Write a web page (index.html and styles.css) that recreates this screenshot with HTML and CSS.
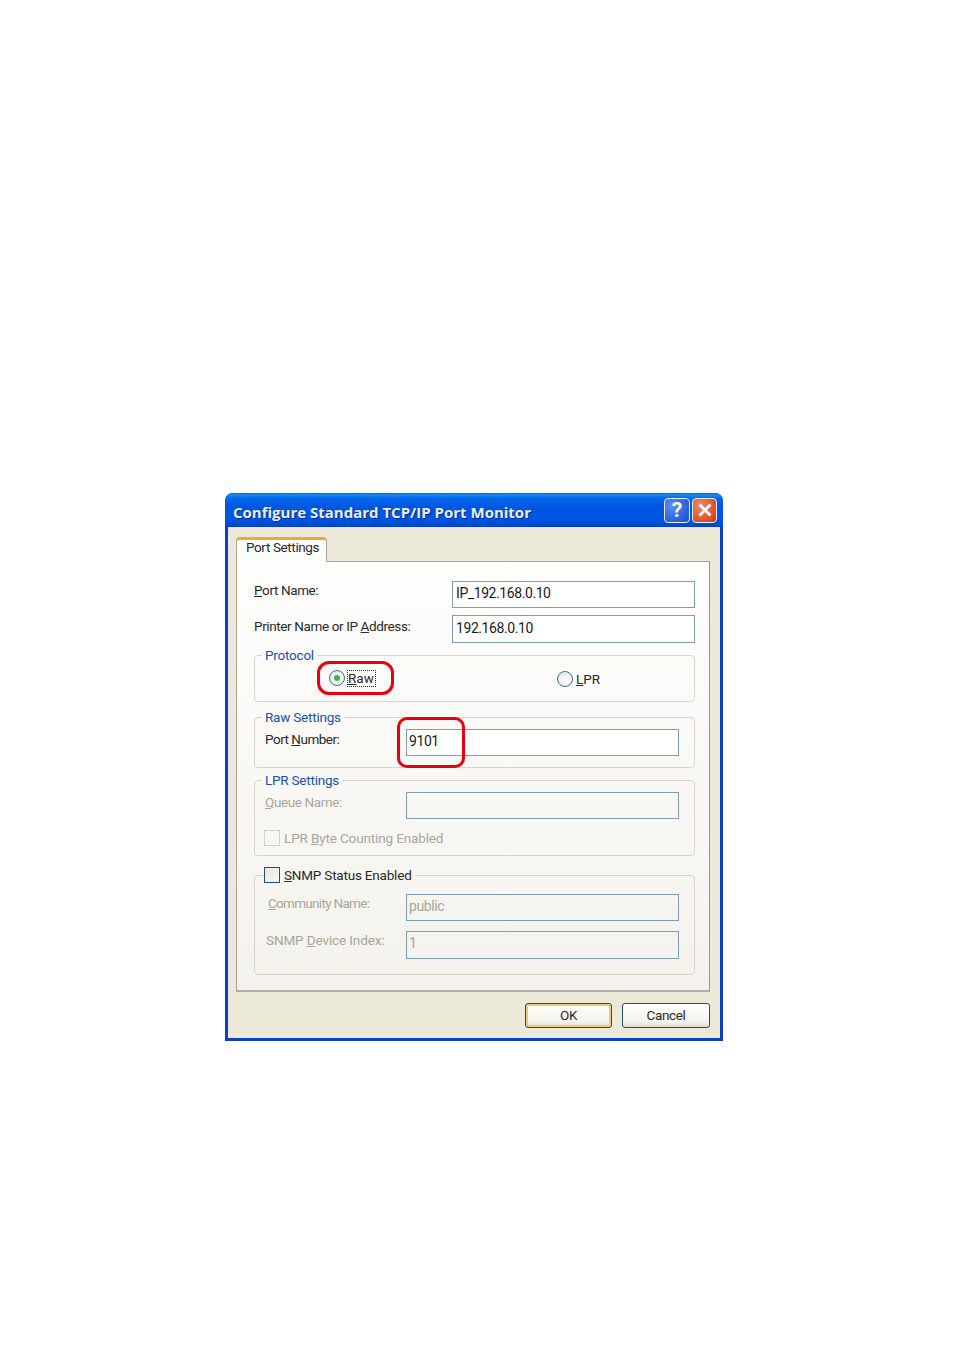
FILE: index.html
```html
<!DOCTYPE html>
<html lang="en">
<head>
<meta charset="utf-8">
<title>Configure Standard TCP/IP Port Monitor</title>
<link rel="stylesheet" href="styles.css">
</head>
<body>
<div class="dialog">
  <header class="titlebar">
    <span class="title">Configure Standard TCP/IP Port Monitor</span>
    <div class="controls">
      <span class="ctrl help">?</span>
      <span class="ctrl close">
        <svg width="16" height="16" viewBox="0 0 16 16"><path d="M2.5 2.5 13.5 13.5M13.5 2.5 2.5 13.5" stroke="#fff" stroke-width="2.8" fill="none"/></svg>
      </span>
    </div>
  </header>
  <div class="client">
    <div class="tabstrip"><span class="tab">Port Settings</span></div>
    <div class="panel">
      <div class="row row-a">
        <span class="lbl lbl-a"><u>P</u>ort Name:</span>
        <span class="input wide">IP_192.168.0.10</span>
      </div>
      <div class="row row-b">
        <span class="lbl lbl-a">Printer Name or IP <u>A</u>ddress:</span>
        <span class="input wide">192.168.0.10</span>
      </div>

      <fieldset class="group g-protocol">
        <legend>Protocol</legend>
        <div class="radios">
          <span class="radio-item raw">
            <span class="radio on"><i></i></span><span class="focus"><u>R</u>aw</span>
          </span>
          <span class="radio-item lpr">
            <span class="radio"></span><span><u>L</u>PR</span>
          </span>
        </div>
      </fieldset>

      <fieldset class="group g-raw">
        <legend>Raw Settings</legend>
        <div class="row inset">
          <span class="lbl lbl-b">Port <u>N</u>umber:</span>
          <span class="input mid">9101</span>
        </div>
      </fieldset>

      <fieldset class="group g-lpr">
        <legend>LPR Settings</legend>
        <div class="row inset off">
          <span class="lbl lbl-b lbl-q"><u>Q</u>ueue Name:</span>
          <span class="input mid"></span>
        </div>
        <div class="check-row off">
          <span class="check dim"></span><span>LPR <u>B</u>yte Counting Enabled</span>
        </div>
      </fieldset>

      <fieldset class="group g-snmp">
        <legend class="legend-check"><span class="check"></span><span><u>S</u>NMP Status Enabled</span></legend>
        <div class="row inset off first">
          <span class="lbl lbl-c"><u>C</u>ommunity Name:</span>
          <span class="input mid">public</span>
        </div>
        <div class="row inset off second">
          <span class="lbl lbl-d">SNMP <u>D</u>evice Index:</span>
          <span class="input mid">1</span>
        </div>
      </fieldset>
    </div>
    <div class="buttons">
      <span class="btn default">OK</span>
      <span class="btn">Cancel</span>
    </div>
  </div>
  <div class="mark mark-raw"></div>
  <div class="mark mark-port"></div>
</div>
</body>
</html>
```
FILE: styles.css
```css
* { box-sizing: border-box; }
html, body { margin: 0; background: #fff; }
body { height: 1350px; overflow: hidden; }

.dialog {
  position: relative;
  width: 498px;
  height: 548px;
  margin: 493px 0 0 225px;
  display: flex;
  flex-direction: column;
  font-family: Roboto, "Liberation Sans", Arial, sans-serif;
  font-size: 13.5px;
  letter-spacing: -0.38px;
  color: #2a2a2a;
}

.titlebar {
  height: 34px;
  flex: none;
  display: flex;
  align-items: center;
  justify-content: space-between;
  padding: 0 6px 0 8px;
  border-radius: 7px 7px 0 0;
  background: linear-gradient(#0a62e2 0, #0f8cf5 2px, #0868ec 5px, #0055e3 14px, #0056e6 26px, #0049cc 32px, #0040bb 34px);
}
.title {
  font-family: "Open Sans", sans-serif;
  font-weight: 700;
  font-size: 15px;
  letter-spacing: 0;
  line-height: 20px;
  padding-top: 3px;
  color: #e6eeff;
  text-shadow: 1px 1px 1px #0a2f90;
}
.controls { display: flex; gap: 2px; }
.ctrl {
  width: 26px;
  height: 25px;
  display: flex;
  align-items: center;
  justify-content: center;
  border: 1px solid #e6eefc;
  border-radius: 4px;
}
.help {
  background: radial-gradient(circle at 30% 30%, #5b8ff0, #2a5fd6 70%, #1d49b8);
  color: #fff;
  font-size: 21px;
  font-weight: 700;
  letter-spacing: 0;
}
.close { background: radial-gradient(circle at 30% 30%, #ea8a68, #dd4f2a 70%, #c03a18); width: 25px; }

.client {
  flex: 1;
  display: flex;
  flex-direction: column;
  background: #ece9d8;
  border: solid #0a3fc6;
  border-width: 0 3px 3px;
  padding: 10px 10px 0 8px;
}
.tabstrip { height: 24px; display: flex; flex: none; }
.tab {
  width: 91px;
  height: 25px;
  padding: 0 0 0 9px;
  background: #fdfdfb;
  border: 1px solid #a9a595;
  border-top: 3px solid #f0a92c;
  border-bottom: 0;
  border-radius: 4px 4px 0 0;
  line-height: 15px;
  position: relative;
  z-index: 1;
}
.panel {
  height: 431px;
  flex: none;
  padding: 19px 14px 0 17px;
  background: linear-gradient(#fefefd, #f4f2ec);
  border: 1px solid #a9a595;
  border-right-color: #9b9888;
  border-bottom: 2px solid #b2ae9f;
}

.row { display: flex; align-items: flex-start; }
.row-a { height: 27px; margin-bottom: 7px; }
.row-b { height: 28px; }
.lbl { line-height: 18px; }
.lbl-a { width: 198px; flex: none; }
.row-b .lbl { padding-top: 2px; }
.lbl-b { width: 141px; flex: none; padding-top: 1px; letter-spacing: -0.5px; }
.lbl-q { padding-top: 1px; letter-spacing: -0.38px; }
.lbl-c { width: 138px; flex: none; margin-left: 3px; letter-spacing: -0.7px; }
.lbl-d { width: 140px; flex: none; margin-left: 1px; letter-spacing: -0.11px; }
.input {
  display: block;
  height: 27px;
  line-height: 23px;
  padding: 0 3px;
  background: #fff;
  border: 1px solid #7f9db9;
  color: #1a1a1a;
  font-size: 14px;
  letter-spacing: -0.42px;
}
.row-b .input { height: 28px; line-height: 24px; }
.wide { width: 243px; }
.mid { width: 273px; padding-left: 2px; }

.group {
  margin: 0;
  padding: 0;
  min-width: 0;
  border: 1px solid #d8d6c8;
  border-radius: 4px;
}
.group legend {
  margin-left: 7px;
  padding: 0 3px;
  height: 16px;
  line-height: 16px;
  letter-spacing: -0.22px;
  color: #2150b4;
}
.g-protocol { height: 55px; margin-top: 4px; }
.g-raw { height: 59px; margin-top: 7px; }
.g-lpr { height: 84px; margin-top: 4px; }
.g-snmp { height: 109px; margin-top: 10px; }

.radios { display: flex; height: 30px; padding: 6px 0 0 74px; }
.radio-item { display: flex; align-items: center; gap: 3px; height: 18px; letter-spacing: 0; }
.raw { width: 228px; }
.lpr { margin-top: 1px; }
.radio {
  width: 16px;
  height: 16px;
  flex: none;
  display: flex;
  align-items: center;
  justify-content: center;
  border: 1.5px solid #3d6f91;
  border-radius: 50%;
  background: radial-gradient(circle at 60% 60%, #fff, #dfe3e0);
}
.radio i { width: 6px; height: 6px; border-radius: 50%; background: #43b04a; }
.focus { outline: 1px dotted #333; line-height: 15px; padding: 0 1px 0 0; }

.inset { padding-left: 10px; height: 27px; margin-top: 4px; }
.off .lbl, .off .input, .check-row.off { color: #a9a79a; }
.off .input { background: transparent; }
.check-row {
  display: flex;
  align-items: center;
  gap: 4px;
  margin: 10px 0 0 9px;
  height: 18px;
  letter-spacing: -0.14px;
}
.check {
  display: block;
  width: 16px;
  height: 16px;
  flex: none;
  background: linear-gradient(135deg, #e6e4da, #fbfbf8);
  border: 1px solid #1c5180;
}
.check.dim { background: transparent; border-color: #d4d2c4; }
.group .legend-check {
  display: flex;
  align-items: center;
  gap: 4px;
  height: 18px;
  margin-left: 9px;
  padding: 0 3px 0 0;
  letter-spacing: -0.2px;
  color: #2a2a2a;
}
.inset.first { margin-top: 10px; }
.first .lbl { padding-top: 0; }
.second { margin-top: 10px; height: 28px; }
.second .input { height: 28px; }

.buttons {
  display: flex;
  justify-content: flex-end;
  gap: 10px;
  margin-top: 11px;
}
.btn {
  width: 88px;
  height: 25px;
  display: flex;
  align-items: center;
  justify-content: center;
  padding-bottom: 2px;
  border: 1px solid #1e4f73;
  border-radius: 3px;
  background: linear-gradient(#fff, #f3f2ea 80%, #dcd8c8);
}
.btn.default {
  width: 87px;
  box-shadow: inset 0 0 0 2px #f3c878;
}

.mark {
  position: absolute;
  border: 3px solid #e8000f;
}
.mark-raw { left: 92px; top: 168px; width: 77px; height: 34px; border-radius: 12px; }
.mark-port { left: 172px; top: 224px; width: 68px; height: 51px; border-radius: 10px; }
```
